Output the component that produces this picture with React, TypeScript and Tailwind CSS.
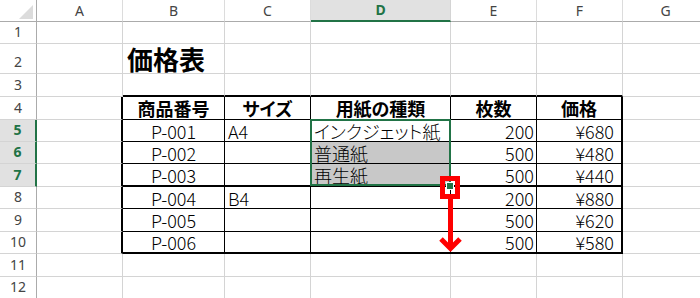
import React from "react";

const COLS = ["A", "B", "C", "D", "E", "F", "G"];
const ROW_NUMS = [1, 2, 3, 4, 5, 6, 7, 8, 9, 10, 11, 12];

type Align = "l" | "c" | "r";

const HEAD = ["商品番号", "サイズ", "用紙の種類", "枚数", "価格"];
const DATA: string[][] = [
  ["P-001", "A4", "インクジェット紙", "200", "¥680"],
  ["P-002", "", "普通紙", "500", "¥480"],
  ["P-003", "", "再生紙", "500", "¥440"],
  ["P-004", "B4", "", "200", "¥880"],
  ["P-005", "", "", "500", "¥620"],
  ["P-006", "", "", "500", "¥580"],
];
const ALIGN: Align[] = ["c", "l", "l", "r", "r"];

// Gridlines are light gray; the price table B4:F10 gets black rules,
// with a heavy outline and a heavy rule under row 7.
function borderClass(r: number, c: number): string {
  const inTable = r >= 4 && r <= 10;
  let right = "border-r border-r-[#d4d4d4]";
  if (inTable) {
    if (c === 0 || c === 5) right = "border-r-2 border-r-black";
    else if (c >= 1 && c <= 4) right = "border-r border-r-black";
  }
  let bottom = "border-b border-b-[#d4d4d4]";
  if (c >= 1 && c <= 5) {
    if (r === 3 || r === 7 || r === 10) bottom = "border-b-2 border-b-black";
    else if (inTable) bottom = "border-b border-b-black";
  }
  return `${right} ${bottom}`;
}

function alignClass(a: Align, c: number): string {
  if (a === "c") return "justify-center";
  if (a === "l") return "justify-start pl-[3px]";
  return c === 5 ? "justify-end pr-[7px]" : "justify-end pr-[2px]";
}

function SheetCell({ r, c }: { r: number; c: number }) {
  const base = `flex min-w-0 items-center overflow-visible whitespace-nowrap ${borderClass(r, c)}`;
  const gray = (r === 6 || r === 7) && c === 3 ? "bg-[#c8c8c8]" : "bg-white";

  if (r === 2 && c === 1) {
    return (
      <div className={`${base} ${gray} items-end pl-[4px] pb-[1px]`}>
        <span className="block text-[26px] font-bold leading-none text-black">価格表</span>
      </div>
    );
  }

  if (r === 4 && c >= 1 && c <= 5) {
    return (
      <div className={`${base} ${gray} justify-center`}>
        <span className="block text-[18px] font-bold leading-none text-black">{HEAD[c - 1]}</span>
      </div>
    );
  }

  if (r >= 5 && r <= 10 && c >= 1 && c <= 5) {
    const text = DATA[r - 5][c - 1];
    return (
      <div className={`${base} ${gray} ${alignClass(ALIGN[c - 1], c)}`}>
        {text ? (
          <span className="block text-[18px] font-light leading-none text-black">{text}</span>
        ) : null}
      </div>
    );
  }

  return <div className={`${base} ${gray}`} />;
}

function ColHeader({ label }: { label: string }) {
  const active = label === "D";
  return (
    <div
      className={
        active
          ? "flex items-center justify-center border-r border-r-[#d4d4d4] border-b-2 border-b-[#217346] bg-[#e1e1e1] text-[14px] font-bold leading-none text-[#217346]"
          : "flex items-center justify-center border-r border-r-[#dcdcdc] border-b border-b-[#ababab] bg-white text-[14px] leading-none text-[#444]"
      }
    >
      <span className="block">{label}</span>
    </div>
  );
}

function RowHeader({ n }: { n: number }) {
  const active = n >= 5 && n <= 7;
  return (
    <div
      className={
        active
          ? "flex items-end justify-center pb-[4px] border-r-2 border-r-[#217346] border-b border-b-[#d4d4d4] bg-[#e1e1e1] text-[14px] font-bold leading-none text-[#217346]"
          : "flex items-end justify-center pb-[4px] border-r border-r-[#ababab] border-b border-b-[#d4d4d4] bg-white text-[14px] leading-none text-[#444]"
      }
    >
      <span className="block">{n}</span>
    </div>
  );
}

export default function App() {
  return (
    <div className="relative h-[298px] w-[700px] overflow-hidden bg-white">
      <div className="grid grid-cols-[37px_86px_102px_86px_140px_86px_86px_86px] grid-rows-[22px_22px_30px_23px_23px_22px_22px_23px_22px_23px_22px_23px_22px] font-['Noto_Sans',sans-serif]">
        {/* corner */}
        <div className="flex items-end justify-end border-r border-r-[#ababab] border-b border-b-[#ababab] bg-white pb-[2px] pr-[2px]">
          <svg width="15" height="14" viewBox="0 0 15 14">
            <polygon points="14,0 14,14 0,14" fill="#dcdcdc" />
          </svg>
        </div>
        {COLS.map((c) => (
          <ColHeader key={c} label={c} />
        ))}

        {ROW_NUMS.map((r) => (
          <React.Fragment key={r}>
            <RowHeader n={r} />
            {COLS.map((_, ci) => (
              <div key={ci} className="contents font-['Noto_Sans_CJK_JP',sans-serif] [font-feature-settings:'palt']">
                <SheetCell r={r} c={ci} />
              </div>
            ))}
          </React.Fragment>
        ))}
      </div>

      {/* selected range D5:D7 */}
      <div className="pointer-events-none absolute left-[310px] top-[119px] h-[67px] w-[141px] border-2 border-[#217346]" />
      {/* fill handle */}
      <div className="pointer-events-none absolute left-[446px] top-[182px] h-[8px] w-[8px] border border-white bg-[#217346]" />

      {/* drag arrow from the fill handle down to row 10 */}
      <svg
        className="pointer-events-none absolute left-0 top-0"
        width="700"
        height="298"
        viewBox="0 0 700 298"
      >
        <rect x="442.5" y="178.5" width="15" height="18" fill="none" stroke="#ff0000" strokeWidth="5" />
        <line x1="450.5" y1="199" x2="450.5" y2="247" stroke="#ff0000" strokeWidth="5" />
        <polyline
          points="441,239 450.5,248.5 460,239"
          fill="none"
          stroke="#ff0000"
          strokeWidth="5"
          strokeLinejoin="miter"
        />
      </svg>
    </div>
  );
}
